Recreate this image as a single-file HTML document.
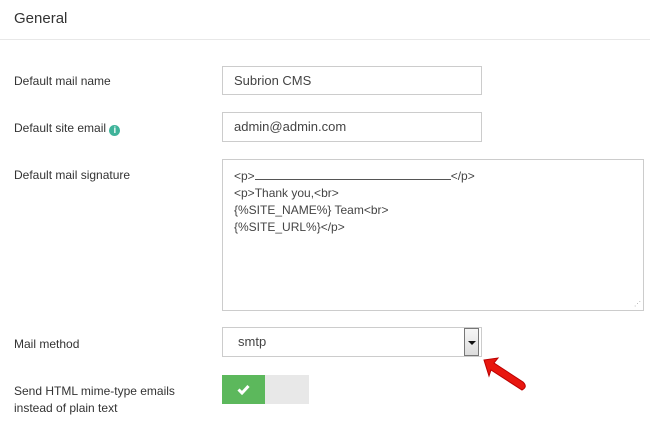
<!DOCTYPE html>
<html><head><style>
body{margin:0;width:650px;height:439px;background:#fff;font-family:"Liberation Sans",sans-serif;color:#333;position:relative;overflow:hidden}
.a{position:absolute}
.lbl{font-size:12px;color:#333;left:14px}
.inp{border:1px solid #ccc;box-sizing:border-box;background:#fff;font-size:13px;color:#444;padding-left:11px}
</style></head><body>
<div class="a" style="left:14px;top:10px;font-size:15px;color:#333">General</div>
<div class="a" style="left:0;top:39px;width:650px;height:1px;background:#e8e8e8"></div>

<div class="a lbl" style="top:74px">Default mail name</div>
<div class="a inp" style="left:222px;top:66px;width:260px;height:29px;line-height:27px">Subrion CMS</div>

<div class="a lbl" style="top:121px">Default site email <span style="display:inline-block;width:11px;height:11px;border-radius:50%;background:#3fb39a;color:#fff;font-size:9px;line-height:11px;text-align:center;font-weight:bold;vertical-align:-1px">i</span></div>
<div class="a inp" style="left:222px;top:112px;width:260px;height:30px;line-height:28px">admin@admin.com</div>

<div class="a lbl" style="top:168px">Default mail signature</div>
<div class="a inp" style="left:222px;top:159px;width:422px;height:152px;padding:8px 0 0 11px;font-size:12px;line-height:17px">&lt;p&gt;<span style="display:inline-block;width:196px;border-bottom:1px solid #555;height:11px"></span>&lt;/p&gt;<br>&lt;p&gt;Thank you,&lt;br&gt;<br>{%SITE_NAME%} Team&lt;br&gt;<br>{%SITE_URL%}&lt;/p&gt;
<div class="a" style="right:2px;bottom:2px;font-size:7px;color:#aaa;line-height:7px">⋰</div></div>

<div class="a lbl" style="top:337px">Mail method</div>
<div class="a inp" style="left:222px;top:327px;width:260px;height:30px;line-height:28px;padding-left:15px">smtp</div>
<div class="a" style="left:464px;top:328px;width:15px;height:28px;box-sizing:border-box;border:1px solid #777;background:linear-gradient(#f6f6f6,#ddd)"><div class="a" style="left:3px;top:12px;width:0;height:0;border-left:4px solid transparent;border-right:4px solid transparent;border-top:4px solid #111"></div></div>
<svg class="a" style="left:478px;top:352px" width="54" height="46" viewBox="0 0 54 46"><path d="M6 8 L20 6 L16 11 L45 30 Q50 35 44 38 L13 18 L11 24 Z" fill="#e8170f" stroke="#b00" stroke-width="1"/></svg>

<div class="a lbl" style="top:383px;line-height:17px">Send HTML mime-type emails<br>instead of plain text</div>
<div class="a" style="left:222px;top:375px;width:87px;height:29px;background:#e8e8e8"></div>
<div class="a" style="left:222px;top:375px;width:43px;height:29px;background:#5cb85c"><svg class="a" style="left:15px;top:9px" width="13" height="11" viewBox="0 0 13 11"><path d="M1.5 5.5 L5 9 L11.5 2" stroke="#fff" stroke-width="3" fill="none"/></svg></div>
</body></html>
